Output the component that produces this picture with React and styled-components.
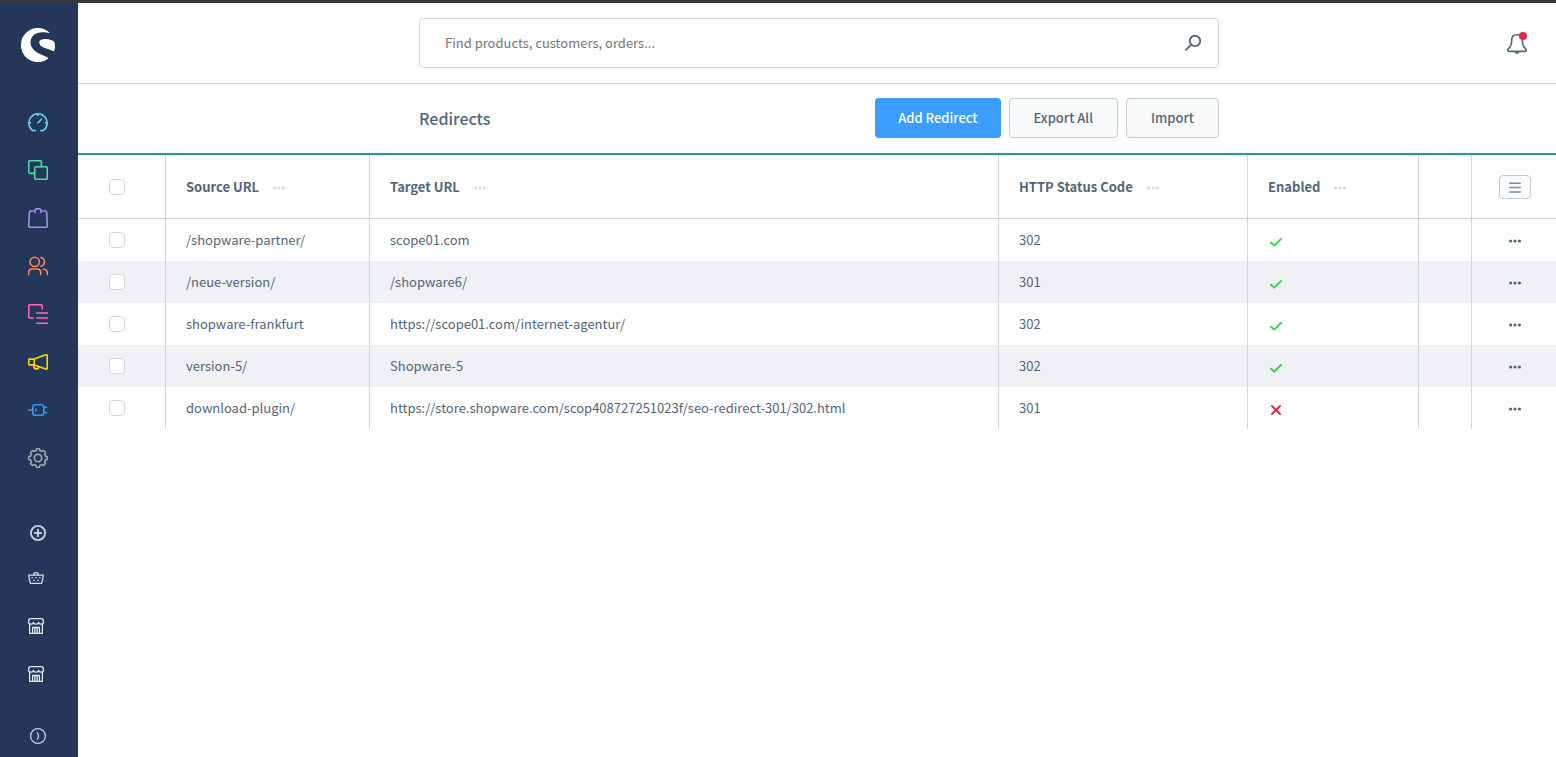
import React, { useState } from 'react'
import styled, { createGlobalStyle } from 'styled-components'

const GlobalStyle = createGlobalStyle`
  * {
    box-sizing: border-box;
  }

  body {
    margin: 0;
    background: #fff;
    color: #52667a;
    font-family: 'Source Sans Pro', 'Noto Sans CJK SC', sans-serif;
    font-size: 13px;
    line-height: 20px;
  }

  button,
  input {
    font: inherit;
    color: inherit;
  }
`

const Page = styled.div`
  display: flex;
  min-height: 100vh;
  border-top: 3px solid #38383c;
`

const Sidebar = styled.aside`
  display: flex;
  flex-direction: column;
  flex: none;
  width: 78px;
  background: #243758;
`

const Logo = styled.a`
  display: flex;
  padding: 25px 21px 36px;
`

const Nav = styled.nav`
  display: flex;
  flex-direction: column;
`

const SalesChannels = styled(Nav)`
  margin-top: 30px;
`

const NavLink = styled.a`
  display: flex;
  align-items: center;
  height: 48px;
  padding-left: 28px;
  color: ${(props) => props.$color};
`

const SidebarButton = styled.button`
  display: flex;
  align-items: center;
  height: 42px;
  padding: 0 0 0 28px;
  border: none;
  background: none;
  color: #c3cddb;
  cursor: pointer;
`

const ExpandButton = styled(SidebarButton)`
  margin-top: auto;
`

const LineIcon = styled.svg`
  display: block;
  flex: none;
  fill: none;
  stroke: currentColor;
  stroke-linecap: round;
  stroke-linejoin: round;
`

const Main = styled.main`
  flex: 1;
  min-width: 0;
`

const Bar = styled.div`
  display: grid;
  grid-template-columns: 1fr minmax(0, 800px) 1fr;
  align-items: center;
  padding-left: 4px;
`

const Header = styled(Bar)`
  height: 81px;
  border-bottom: 1px solid #d1d9e0;
`

const SearchForm = styled.form`
  grid-column: 2;
  display: flex;
  align-items: center;
  height: 50px;
  padding: 0 15px 0 25px;
  border: 1px solid #d1d9e0;
  border-radius: 4px;
`

const SearchInput = styled.input`
  flex: 1;
  min-width: 0;
  padding: 0;
  border: none;
  outline: none;
  background: none;

  &::placeholder {
    color: #757575;
    opacity: 1;
  }
`

const IconButton = styled.button`
  display: flex;
  align-items: center;
  justify-content: center;
  padding: 0;
  border: none;
  background: none;
  color: #52667a;
  cursor: pointer;
`

const NotificationButton = styled(IconButton)`
  justify-self: end;
  margin-right: 27px;
`

const Toolbar = styled(Bar)`
  height: 71px;
  padding-bottom: 1px;
  border-bottom: 2px solid #2b9b8f;
`

const ToolbarContent = styled.div`
  grid-column: 2;
  display: flex;
  align-items: center;
  justify-content: space-between;
`

const Title = styled.h1`
  margin: 0;
  font-size: 16px;
  font-weight: 500;
  line-height: 24px;
`

const Actions = styled.div`
  display: flex;
  gap: 8px;
`

const Button = styled.button`
  height: 40px;
  padding: 0 ${(props) => (props.$primary ? '23px' : '24px')};
  border: ${(props) => (props.$primary ? 'none' : '1px solid #c2ccd6')};
  border-radius: 4px;
  background: ${(props) => (props.$primary ? '#3a9eff' : '#f9fafc')};
  color: ${(props) => (props.$primary ? '#fff' : '#52667a')};
  font-weight: 500;
  cursor: pointer;
`

const Table = styled.table`
  width: 100%;
  table-layout: fixed;
  border-collapse: separate;
  border-spacing: 0;
`

const Col = styled.col`
  width: ${(props) => props.$width};
`

const Row = styled.tr`
  background: ${(props) => (props.$striped ? '#f0f1f5' : '#fff')};
`

const HeadCell = styled.th`
  height: 64px;
  padding: 0 20px;
  border-right: 1px solid #d1d9e0;
  border-bottom: 1px solid #d1d9e0;
  text-align: left;
  font-weight: 700;

  &:last-child {
    padding-left: 22px;
    border-right: none;
  }
`

const HeadContent = styled.div`
  display: flex;
  align-items: center;
  gap: 14px;
`

const HeadMenu = styled(IconButton)`
  color: #d1d9e0;
`

const Cell = styled.td`
  height: 42px;
  padding: 0 20px;
  border-right: 1px solid #d1d9e0;
  white-space: nowrap;

  &:last-child {
    padding-left: 22px;
    border-right: none;
  }
`

const Centered = styled.div`
  display: flex;
  justify-content: center;
`

const Checkbox = styled.input`
  appearance: none;
  display: block;
  width: 16px;
  height: 16px;
  margin: 0 0 0 11px;
  border: 1px solid #d1d9e0;
  border-radius: 4px;
  background: #fff;
  cursor: pointer;

  &:checked {
    border-color: #3a9eff;
    background: #3a9eff;
  }
`

const SettingsButton = styled(IconButton)`
  width: 32px;
  height: 24px;
  border: 1px solid #c2ccd6;
  border-radius: 4px;
  background: #f9fafc;
  color: #758ca3;
`

// eight-toothed wheel around the centre of a 20x20 box
const gearPath = () => {
  const points = []
  for (let i = 0; i < 8; i++) {
    const teeth = [[-14, 7.7], [-9, 9.3], [9, 9.3], [14, 7.7]]
    teeth.forEach(([offset, r]) => {
      const a = ((i * 45 + offset) * Math.PI) / 180
      points.push(`${(10 + r * Math.sin(a)).toFixed(2)} ${(10 - r * Math.cos(a)).toFixed(2)}`)
    })
  }
  return `M${points.join('L')}Z`
}

const shopPaths = [
  'M2.8 2.6H13.2Q15.4 2.6 15.4 5V6.4Q15.4 8.2 13.2 8.2Q11.4 8.2 10.6 6.4Q9.8 8.2 8 8.2Q6.2 8.2 5.4 6.4Q4.6 8.2 2.8 8.2Q.6 8.2.6 6.4V5Q.6 2.6 2.8 2.6Z',
  'M1.6 8.4V17.4H14.4V8.4',
  'M4.6 17.2V11.5H11.4V17.2M6.9 11.6V17.2M9.1 11.6V17.2',
]

const mainMenu = [
  {
    label: 'Dashboard',
    color: '#66d1ee',
    paths: [
      'M7.3 18.6H4.8A9.2 9.2 0 1 1 15.2 18.6H12.7',
      'M1 10.8H2.6M17.4 10.8H19M10 1.9V3.4M10 10.8L13.4 7.2',
    ],
  },
  {
    label: 'Catalogues',
    color: '#57d9a3',
    paths: [
      'M6.5 13.4H2.2Q.7 13.4.7 11.9V2.2Q.7.7 2.2.7H11.9Q13.4.7 13.4 2.2V6.4',
      'M8.2 6.7H17.8Q19.3 6.7 19.3 8.2V17.8Q19.3 19.3 17.8 19.3H8.2Q6.7 19.3 6.7 17.8V8.2Q6.7 6.7 8.2 6.7Z',
    ],
  },
  {
    label: 'Orders',
    color: '#a092f0',
    paths: [
      'M5.2 3H2.8Q1.5 3 1.4 4.3L.7 17.7Q.7 19.3 2.2 19.3H17.8Q19.3 19.3 19.3 17.7L18.6 4.3Q18.5 3 17.2 3H14.8',
      'M7 4.6V2.7Q7 .7 9 .7H11Q13 .7 13 2.7V4.6',
    ],
  },
  {
    label: 'Customers',
    color: '#f88962',
    paths: [
      'M6.7 1.3A4.6 4.6 0 1 1 6.7 10.5A4.6 4.6 0 1 1 6.7 1.3Z',
      'M.7 18.6V16.6Q.7 13 4.3 13H9.1Q12.7 13 12.7 16.6V18.6',
      'M13 1.4A4.6 4.6 0 0 1 13 10.3M15.3 13Q19.3 13.4 19.3 17V18.6',
    ],
  },
  {
    label: 'Content',
    color: '#ff68b4',
    paths: [
      'M14.2 5V2.3Q14.2.7 12.6.7H2.3Q.7.7.7 2.3V12.4Q.7 14 2.3 14H5.2',
      'M8.8 9H19.3M8.8 14H19.3M8.8 19.2H19.3',
    ],
  },
  {
    label: 'Marketing',
    color: '#ffd700',
    paths: [
      'M6.2 7.1H1.7Q.7 7.1.7 8.1V11.9Q.7 12.9 1.7 12.9H6.2Z',
      'M6.2 7.1L17.8 2.8Q19.2 2.4 19.2 3.8V16.2Q19.2 17.6 17.8 17.1L6.2 12.9',
      'M5.8 13.1V14.4Q6 17 8.3 17Q10.4 17 10.9 14.8',
    ],
  },
  {
    label: 'Extensions',
    color: '#3596f5',
    paths: [
      'M.7 10H4.8M16 7.4H18.6M16 12.6H18.6M7.8 9.2V10.8',
      'M7.3 4.7H13.2Q15.8 4.7 15.8 7.3V12.7Q15.8 15.3 13.2 15.3H7.3Q4.8 15.3 4.8 12.7V7.3Q4.8 4.7 7.3 4.7Z',
    ],
  },
  {
    label: 'Settings',
    color: '#9aa8b5',
    paths: [gearPath(), 'M10 6.3A3.7 3.7 0 1 1 10 13.7A3.7 3.7 0 1 1 10 6.3Z'],
  },
]

const channels = [
  {
    label: 'Headless',
    color: '#d5dce6',
    paths: [
      'M.7 7.2H15.3L14 14.3Q13.8 15.3 12.8 15.3H3.2Q2.2 15.3 2 14.3Z',
      'M5.8 7V6.2Q5.8 4.6 7.3 4.6H8.7Q10.2 4.6 10.2 6.2V7',
      'M4 9.7H4.4M7.8 9.7H8.2M11.6 9.7H12M5.8 12.4H6.2M9.8 12.4H10.2',
    ],
  },
  { label: 'Storefront', color: '#e3e8ef', paths: shopPaths },
  { label: 'Storefront EN', color: '#e3e8ef', paths: shopPaths },
]

const columns = ['Source URL', 'Target URL', 'HTTP Status Code', 'Enabled']

const redirects = [
  { source: '/shopware-partner/', target: 'scope01.com', code: 302, enabled: true },
  { source: '/neue-version/', target: '/shopware6/', code: 301, enabled: true },
  { source: 'shopware-frankfurt', target: 'https://scope01.com/internet-agentur/', code: 302, enabled: true },
  { source: 'version-5/', target: 'Shopware-5', code: 302, enabled: true },
  {
    source: 'download-plugin/',
    target: 'https://store.shopware.com/scop408727251023f/seo-redirect-301/302.html',
    code: 301,
    enabled: false,
  },
]

function Icon({ paths, stroke = 1.6 }) {
  return (
    <LineIcon width="20" height="20" viewBox="0 0 20 20" strokeWidth={stroke} aria-hidden="true">
      {paths.map((d) => <path key={d} d={d} />)}
    </LineIcon>
  )
}

function Dots() {
  return (
    <svg width="12" height="6" viewBox="0 0 12 6" fill="currentColor" aria-hidden="true">
      <circle cx="1.6" cy="4" r="1.6" />
      <circle cx="6" cy="4" r="1.6" />
      <circle cx="10.4" cy="4" r="1.6" />
    </svg>
  )
}

function EnabledIcon({ enabled }) {
  return (
    <LineIcon
      width="16"
      height="20"
      viewBox="0 0 16 20"
      strokeWidth="2"
      color={enabled ? '#3cd24a' : '#de294c'}
      role="img"
      aria-label={enabled ? 'Yes' : 'No'}
    >
      <path d={enabled ? 'M3 12.8L6.2 15.6L13 9' : 'M4 8L12 16M12 8L4 16'} />
    </LineIcon>
  )
}

function App() {
  const [selected, setSelected] = useState([])

  const toggle = (source) => {
    setSelected(selected.includes(source)
      ? selected.filter((s) => s !== source)
      : [...selected, source])
  }

  const toggleAll = (e) => {
    setSelected(e.target.checked ? redirects.map((r) => r.source) : [])
  }

  return (
    <>
      <GlobalStyle />
      <Page>
        <Sidebar>
          <Logo href="#" aria-label="Home">
            <svg width="34" height="34" viewBox="0 0 34 34" fill="#fff" aria-hidden="true">
              <path d="M28.3 4.5A17 17 0 1 0 26.7 31C27.4 30.2 27 29.4 25.8 28.9C18.5 26.2 9.5 22.6 9.5 14.6C9.5 8 14.6 4.3 21.2 4.3C24 4.3 26.3 4.7 28 5.1Q28.7 5 28.3 4.5Z" />
              <path d="M18.3 14.4C18.3 12 21 11 24.5 11C28.5 11 32 12.4 33.3 14C34.3 17 34.2 20 33.2 22.7Q32.9 23.4 32.1 23C26.5 20 18.3 19.8 18.3 14.4Z" />
            </svg>
          </Logo>
          <Nav aria-label="Main menu">
            {mainMenu.map((item) => (
              <NavLink key={item.label} href="#" aria-label={item.label} $color={item.color}>
                <Icon paths={item.paths} />
              </NavLink>
            ))}
          </Nav>
          <SalesChannels aria-label="Sales channels">
            <SidebarButton type="button" aria-label="Add sales channel">
              <Icon
                stroke={1.9}
                paths={['M10 2.9A7.1 7.1 0 1 1 10 17.1A7.1 7.1 0 1 1 10 2.9Z', 'M10 6.8V13.2M6.8 10H13.2']}
              />
            </SidebarButton>
            {channels.map((item) => (
              <NavLink key={item.label} href="#" aria-label={item.label} $color={item.color}>
                <Icon paths={item.paths} stroke={1.3} />
              </NavLink>
            ))}
          </SalesChannels>
          <ExpandButton type="button" aria-label="Expand menu">
            <Icon
              stroke={1.3}
              paths={['M10 2.6A7.4 7.4 0 1 1 10 17.4A7.4 7.4 0 1 1 10 2.6Z', 'M9.2 6.8Q11.8 10 9.2 13.2']}
            />
          </ExpandButton>
        </Sidebar>

        <Main>
          <Header as="header">
            <SearchForm role="search">
              <SearchInput
                type="text"
                aria-label="Search"
                placeholder="Find products, customers, orders..."
              />
              <IconButton type="button" aria-label="Start search">
                <Icon stroke={1.9} paths={['M12 2.7A5.2 5.2 0 1 1 12 13.1A5.2 5.2 0 1 1 12 2.7Z', 'M8.2 11.6L3 16.8']} />
              </IconButton>
            </SearchForm>
            <NotificationButton type="button" aria-label="Notifications">
              <LineIcon width="24" height="24" viewBox="0 0 24 24" strokeWidth="1.6" aria-hidden="true">
                <path d="M12 3.8C8.6 3.8 6.7 6 6.7 9.1C6.7 14.1 6 15.6 3.5 17.7C2.3 18.8 2.5 20.4 4 20.4H20C21.5 20.4 21.7 18.8 20.5 17.7C18 15.6 17.3 14.1 17.3 9.1C17.3 6 15.4 3.8 12 3.8Z" />
                <path d="M10.2 20.9Q12 23.7 13.8 20.9" />
                <circle cx="18" cy="5" r="4" fill="#de294c" stroke="none" />
              </LineIcon>
            </NotificationButton>
          </Header>

          <Toolbar>
            <ToolbarContent>
              <Title>Redirects</Title>
              <Actions>
                <Button type="button" $primary>Add Redirect</Button>
                <Button type="button">Export All</Button>
                <Button type="button">Import</Button>
              </Actions>
            </ToolbarContent>
          </Toolbar>

          <Table>
            <colgroup>
              <Col $width="88px" />
              <Col $width="204px" />
              <Col $width="auto" />
              <Col $width="249px" />
              <Col $width="171px" />
              <Col $width="53px" />
              <Col $width="84px" />
            </colgroup>
            <thead>
              <Row>
                <HeadCell>
                  <Checkbox
                    type="checkbox"
                    aria-label="Select all"
                    checked={selected.length === redirects.length}
                    onChange={toggleAll}
                  />
                </HeadCell>
                {columns.map((name) => (
                  <HeadCell key={name}>
                    <HeadContent>
                      {name}
                      <HeadMenu type="button" aria-label={`${name} options`}>
                        <Dots />
                      </HeadMenu>
                    </HeadContent>
                  </HeadCell>
                ))}
                <HeadCell />
                <HeadCell>
                  <Centered>
                    <SettingsButton type="button" aria-label="List settings">
                      <LineIcon width="12" height="12" viewBox="0 0 12 12" strokeWidth="1.5" aria-hidden="true">
                        <path d="M.8 2.2H11.2M.8 6.6H11.2M.8 11H11.2" />
                      </LineIcon>
                    </SettingsButton>
                  </Centered>
                </HeadCell>
              </Row>
            </thead>
            <tbody>
              {redirects.map((val, key) => (
                <Row key={val.source} $striped={key % 2 === 1}>
                  <Cell>
                    <Checkbox
                      type="checkbox"
                      aria-label={`Select ${val.source}`}
                      checked={selected.includes(val.source)}
                      onChange={() => toggle(val.source)}
                    />
                  </Cell>
                  <Cell>{val.source}</Cell>
                  <Cell>{val.target}</Cell>
                  <Cell>{val.code}</Cell>
                  <Cell><EnabledIcon enabled={val.enabled} /></Cell>
                  <Cell />
                  <Cell>
                    <Centered>
                      <IconButton type="button" aria-label={`Actions for ${val.source}`}>
                        <Dots />
                      </IconButton>
                    </Centered>
                  </Cell>
                </Row>
              ))}
            </tbody>
          </Table>
        </Main>
      </Page>
    </>
  )
}

export default App
